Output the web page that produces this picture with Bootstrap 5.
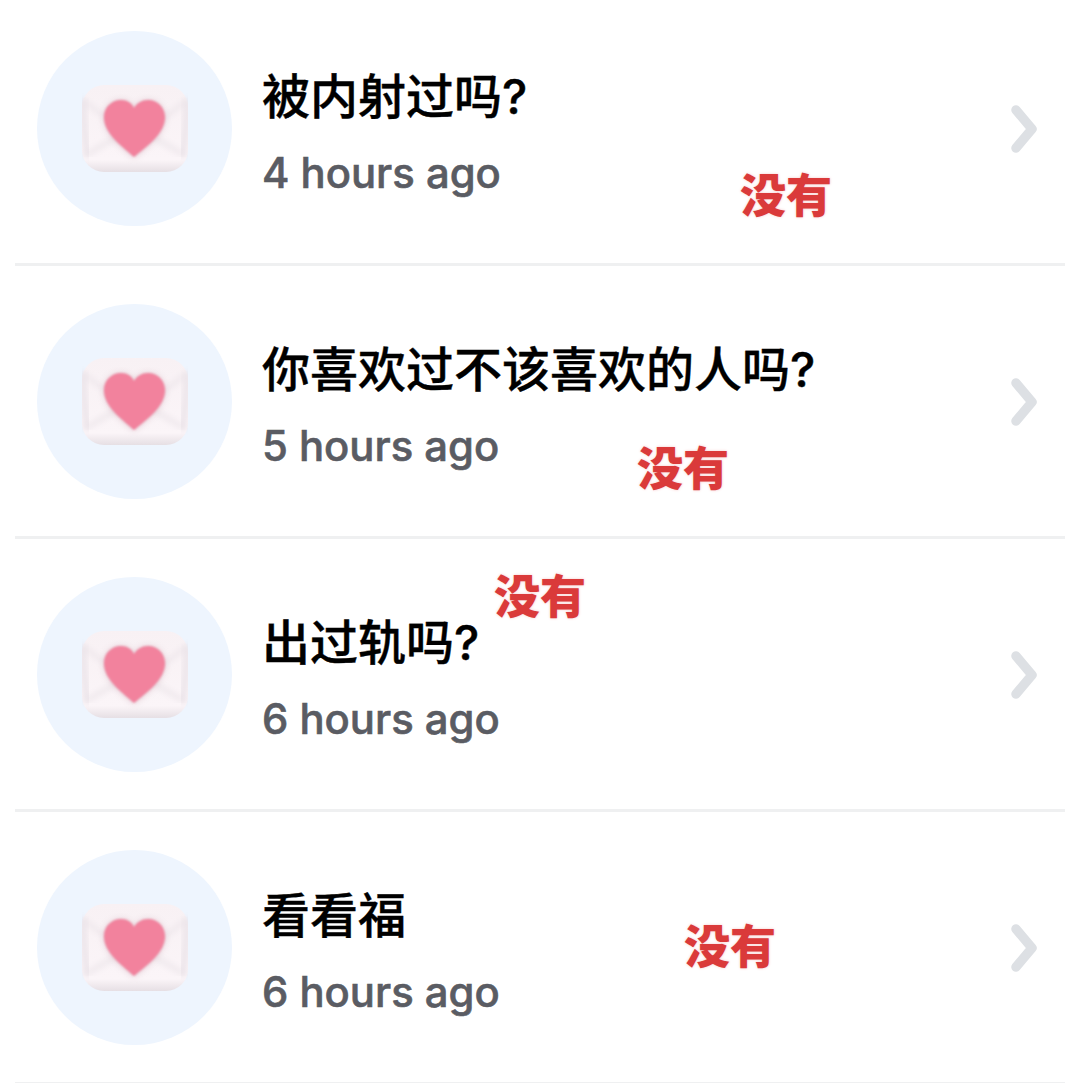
<!DOCTYPE html>
<html lang="zh-CN">
<head>
  <meta charset="UTF-8">
  <title>消息列表</title>
  <link href="https://cdn.jsdelivr.net/npm/bootstrap@5.3.0/dist/css/bootstrap.min.css" rel="stylesheet">
  <style>
    body { background-color: #fff; overflow: hidden; }
    .msg-list { margin: 0 15px; }
    .msg-row { position: relative; height: 273px; padding: 38px 25px 0 22px; border-bottom: 3px solid #eff0f1; }
    .msg-row:first-child { height: 266px; padding-top: 31px; }
    .msg-avatar { width: 195px; height: 195px; background-color: #eef5fe; flex-shrink: 0; }
    .msg-body { margin-left: 30px; height: 195px; }
    .msg-title { font-family: "Inter", "Noto Sans CJK SC", sans-serif; font-size: 48px; font-weight: 500; -webkit-text-stroke: 0.4px #000; line-height: 56px; color: #000; margin-top: 38px; }
    .msg-time { font-family: "Inter", sans-serif; font-size: 41.8px; font-weight: 500; -webkit-text-stroke: 0.6px #5a5c63; line-height: 48px; color: #5a5c63; margin-top: 24px; }
    .msg-arrow { width: 30px; height: 50px; }
    .msg-note { position: absolute; font-family: "Noto Sans CJK SC", sans-serif; font-size: 46px; font-weight: 900; line-height: 54px; color: #da3a3a; text-shadow: 0 0 3px #f6c9c9; }
  </style>
</head>
<body>
  <svg width="0" height="0" class="position-absolute">
    <defs>
      <linearGradient id="envFill" x1="0" y1="0" x2="0" y2="1">
        <stop offset="0" stop-color="#f8f1f4"/>
        <stop offset="0.86" stop-color="#fbf5f8"/>
        <stop offset="1" stop-color="#e6dfe4"/>
      </linearGradient>
      <filter id="soft"><feGaussianBlur stdDeviation="3"/></filter>
      <filter id="softer"><feGaussianBlur stdDeviation="0.8"/></filter>
      <symbol id="envelope" viewBox="0 0 106 87">
        <rect x="0" y="0" width="106" height="87" rx="22" fill="url(#envFill)"/>
        <path d="M2 16 L46 50 M104 16 L60 50" stroke="#e9e2e7" stroke-width="3" fill="none" filter="url(#soft)"/>
        <path d="M4 70 L38 50 M102 70 L68 50" stroke="#e6dfe4" stroke-width="3" fill="none" filter="url(#soft)"/>
        <path d="M1 14 Q1 42 6 72" stroke="#e6dfe5" stroke-width="5" fill="none" filter="url(#soft)"/>
        <path d="M105 14 Q105 42 100 72" stroke="#e6dfe5" stroke-width="5" fill="none" filter="url(#soft)"/>
        <path d="M52 73 C40 62 22 50 22 33 C22 21 31 15 39 15 C45 15 50 18 52 23 C55 18 60 15 66 15 C75 15 83 22 83 33 C83 50 65 62 52 73 Z" fill="#c9a3b0" opacity="0.5" filter="url(#soft)"/>
        <path d="M52 72 C40 61 22 49 22 32 C22 21 31 15 39 15 C45 15 50 18 52 23 C55 18 60 15 66 15 C75 15 83 22 83 32 C83 49 65 61 52 72 Z" fill="#f2829d" filter="url(#softer)"/>
      </symbol>
    </defs>
  </svg>

  <div class="msg-list" id="msgList"></div>

  <script>
    const messages = [
      { title: "被内射过吗?", time: "4 hours ago", noteLeft: 725, noteTop: 165 },
      { title: "你喜欢过不该喜欢的人吗?", time: "5 hours ago", noteLeft: 622, noteTop: 172 },
      { title: "出过轨吗?", time: "6 hours ago", noteLeft: 479, noteTop: 27 },
      { title: "看看福", time: "6 hours ago", noteLeft: 669, noteTop: 104 }
    ];

    const list = document.getElementById("msgList");
    messages.forEach(item => {
      const row = document.createElement("div");
      row.className = "msg-row d-flex align-items-start";
      row.innerHTML = `
        <div class="msg-avatar rounded-circle d-flex align-items-center justify-content-center">
          <svg width="106" height="87"><use href="#envelope"/></svg>
        </div>
        <div class="msg-body flex-grow-1">
          <div class="msg-title">${item.title}</div>
          <div class="msg-time">${item.time}</div>
        </div>
        <div class="d-flex align-items-center" style="height:195px">
          <svg class="msg-arrow" viewBox="0 0 30 50"><path d="M6 6 L22 25 L6 44" fill="none" stroke="#dde0e4" stroke-width="9.5" stroke-linecap="round" stroke-linejoin="round"/></svg>
        </div>
        <div class="msg-note" style="left:${item.noteLeft}px;top:${item.noteTop}px">没有</div>`;
      list.appendChild(row);
    });
  </script>
  <script src="https://cdn.jsdelivr.net/npm/bootstrap@5.3.0/dist/js/bootstrap.bundle.min.js"></script>
</body>
</html>
